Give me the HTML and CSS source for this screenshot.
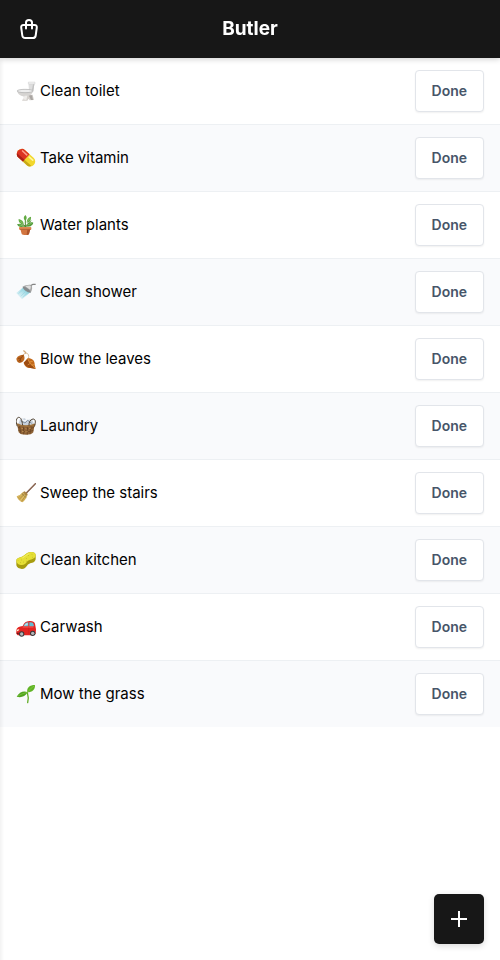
FILE: index.html
```html
<!DOCTYPE html>
<html lang="en">
<head>
  <meta charset="UTF-8" />
  <meta name="viewport" content="width=device-width, initial-scale=1" />
  <title>Butler</title>
  <link rel="stylesheet" href="styles.css">
</head>
<body>
  <header class="header">
    <a class="header-link" href="#shopping" aria-label="Shopping list">
      <svg viewBox="0 0 24 24" width="24" height="24" fill="none" stroke="currentColor" stroke-width="2" stroke-linecap="round" stroke-linejoin="round">
        <path d="M6.500 8h11c1.600 0 2.500 1 2.300 2.500l-1.100 8c-.2 1.600-1.300 2.500-2.900 2.500H8.200c-1.600 0-2.700-.9-2.900-2.500l-1.100-8C4 9 4.900 8 6.500 8z" />
        <path d="M9 11.500V5.500C9 3.800 10.200 3 12 3s3 .8 3 2.500v6" />
      </svg>
    </a>
    <h1 class="header-title">Butler</h1>
  </header>

  <main>
    <ul class="tasks">
      <li class="task">
        <span class="task-name">
          <svg class="icon" viewBox="0 0 60 60" aria-hidden="true">
            <path d="M37 3h20v7h-2l-3 21H39z" fill="#dedede" />
            <path d="M37 3h20v6H37z" fill="#f0f0f0" stroke="#ccc" />
            <path d="M51 10h4l-3 21h-5z" fill="#c2c2c2" />
            <path d="M21 41h29l4 16-13 1-3-5-4 6H18l6-10z" fill="#d5d1cd" />
            <path d="M38 43h10l3 14h-6z" fill="#aaa6a3" />
            <path d="M4 31c2 11 12 16 24 15 12-1 20-5 24-16z" fill="#d6d4d2" />
            <ellipse cx="27" cy="30" rx="24" ry="5" fill="#eee" stroke="#aaa" stroke-width="2" />
            <path d="M20 55l6-11h8l-3 13z" fill="#efedeb" />
          </svg>
          Clean toilet
        </span>
        <button class="done-btn" type="button">Done</button>
      </li>
      <li class="task">
        <span class="task-name">
          <svg class="icon" viewBox="0 0 60 60" aria-hidden="true">
            <g transform="rotate(42 30 29)">
              <rect x="-2" y="14" width="64" height="30" rx="15" fill="#f2d72c" />
              <path d="M31 14H13a15 15 0 0 0 0 30h18z" fill="#dc3322" />
              <path d="M31 37h28c-3 5-6 7-11 7H31z" fill="#c9a817" />
              <path d="M31 37H1c3 5 6 7 11 7h19z" fill="#a91f18" />
              <path d="M9 21h17" stroke="#ff9c86" stroke-width="5" stroke-linecap="round" />
              <path d="M36 21h14" stroke="#fff6a0" stroke-width="5" stroke-linecap="round" />
            </g>
          </svg>
          Take vitamin
        </span>
        <button class="done-btn" type="button">Done</button>
      </li>
      <li class="task">
        <span class="task-name">
          <svg class="icon" viewBox="0 0 60 60" aria-hidden="true">
            <path d="M28 37V12M28 34L12 21M28 34l17-17M28 34L11 31M28 34l17-2" stroke="#49862e" stroke-width="3" fill="none" />
            <path d="M28 17c-7-6-5-12 0-17 5 5 6 11 0 17zM23 28C11 27 7 20 8 12c9 2 15 7 15 16zM32 23c0-9 4-16 13-18 1 10-3 17-13 18z" fill="#62aa43" />
            <path d="M24 34C14 38 6 35 3 28c9-4 16-2 21 6zM32 32c3-9 11-12 20-9-2 9-10 13-20 9z" fill="#4f9a37" />
            <path d="M12 17l9 9M42 10l-9 11M8 29l14 4M47 25l-13 5" stroke="#9bcc7b" stroke-width="2" />
            <path d="M13 41h30l-4 16c-3 4-19 4-22 0z" fill="#d27540" />
            <path d="M34 42h9l-4 15c-1 2-4 3-7 3z" fill="#ae5429" />
            <rect x="9" y="36" width="37" height="8" rx="2" fill="#e08a50" />
            <path d="M12 43h32" stroke="#9b4c29" stroke-width="2" />
          </svg>
          Water plants
        </span>
        <button class="done-btn" type="button">Done</button>
      </li>
      <li class="task">
        <span class="task-name">
          <svg class="icon" viewBox="0 0 60 60" aria-hidden="true">
            <defs>
              <linearGradient id="water" x1="1" y1="0" x2="0" y2="1">
                <stop offset="0" stop-color="#58bdcf" />
                <stop offset="1" stop-color="#c9edf4" stop-opacity=".3" />
              </linearGradient>
            </defs>
            <path d="M22 16L1 33l17 19 26-22z" fill="url(#water)" />
            <path d="M20 24L7 35M29 28L14 43M36 31L20 46" stroke="#7dcbd9" stroke-width="1" />
            <path d="M41 19l6-10c1-2 3-2 5-2h7" fill="none" stroke="#858585" stroke-width="4" />
            <path d="M20 14c9-5 19-7 26-5 4 6 3 15-2 23z" fill="#a5a5a5" />
            <path d="M28 13c6-3 12-3 16-1 1 3 0 7-2 11z" fill="#dfdfdf" />
            <path d="M20 14c8-1 24 9 24 18-10 0-24-10-24-18z" fill="#858a8d" />
          </svg>
          Clean shower
        </span>
        <button class="done-btn" type="button">Done</button>
      </li>
      <li class="task">
        <span class="task-name">
          <svg class="icon" viewBox="0 0 60 60" aria-hidden="true">
            <path d="M20 19c5-6 10-8 15-5 4 4 4 11 1 19" fill="none" stroke="#d9bd9c" stroke-width="3" />
            <path d="M22 5c4 1 6 4 8 8" fill="none" stroke="#d1a879" stroke-width="4" />
            <path d="M23 17c6 12 1 22-12 25-6-1-9-6-10-13 4-9 12-12 22-12z" fill="#bd681f" />
            <path d="M22 18L8 38M15 27L6 28M13 31l2 8" fill="none" stroke="#78380f" stroke-width="2" />
            <path d="M35 28c12-1 22 6 21 19l3 12-12-2c-14 2-22-6-24-16 4-3 7-8 12-13z" fill="#c36a1c" />
            <path d="M35 29c4 11 12 20 24 30-9-1-27-1-36-18z" fill="#9d4c12" />
            <path d="M35 29c4 12 12 20 24 30M40 39l10-2M43 43l-8 5M47 48l8-1" fill="none" stroke="#eba34a" stroke-width="2" />
          </svg>
          Blow the leaves
        </span>
        <button class="done-btn" type="button">Done</button>
      </li>
      <li class="task">
        <span class="task-name">
          <svg class="icon" viewBox="0 0 60 60" aria-hidden="true">
            <path d="M7 25l5-15 14-3 7 5 14-2 8 15-19 9-20-1z" fill="#c9d2dc" />
            <path d="M14 14l13 7 8-8 12 9" fill="none" stroke="#8493a3" stroke-width="3" />
            <path d="M17 11l10 4 6-5" fill="none" stroke="#f6f8fa" stroke-width="4" />
            <path d="M3 24c13 7 39 7 53 1l-4 24c-5 10-38 10-44 0z" fill="#8f6336" />
            <path d="M6 34c14 6 34 6 48 0M7 43c14 6 31 6 45 0M11 29l3 24M22 32l1 23M34 32v24M45 30l-3 23" fill="none" stroke="#65401f" stroke-width="2" />
            <path d="M14 36l7 2M26 38l7 1M38 38l7-2M17 46l6 1M27 48l8-1" stroke="#b98a50" stroke-width="3" />
            <path d="M3 24c13 8 40 8 54 1" fill="none" stroke="#a0733d" stroke-width="5" />
            <path d="M4 31C-2 17 1 5 8 4c7 0 10 9 12 24M39 29c-1-10 4-19 12-20 8 0 9 9 4 23" fill="none" stroke="#514333" stroke-width="3" />
          </svg>
          Laundry
        </span>
        <button class="done-btn" type="button">Done</button>
      </li>
      <li class="task">
        <span class="task-name">
          <svg class="icon" viewBox="0 0 60 60" aria-hidden="true">
            <path d="M28 33L58 2" stroke="#76503c" stroke-width="4" stroke-linecap="round" />
            <path d="M30 30L57 3" stroke="#b48b72" stroke-width="1" />
            <path d="M20 28c-4 6-10 10-18 12 3 8 8 14 17 18 6-4 11-10 14-19z" fill="#d1ae55" />
            <path d="M21 31L6 43M25 33L10 49M29 37L17 55" stroke="#aa8640" stroke-width="2" />
            <path d="M19 34L5 41M27 36L13 53" stroke="#edcf7a" stroke-width="2" />
            <path d="M20 28l6-3 9 8-2 7z" fill="#aa8340" />
            <path d="M17 32l14 12" stroke="#8a7a40" stroke-width="2" />
          </svg>
          Sweep the stairs
        </span>
        <button class="done-btn" type="button">Done</button>
      </li>
      <li class="task">
        <span class="task-name">
          <svg class="icon" viewBox="0 0 60 60" aria-hidden="true">
            <path d="M1 32c0-6 6-8 13-10 8-2 12-8 20-13 9-5 25-4 25 6v13c-2 10-12 11-19 13-7 3-7 8-13 13-8 6-24 2-26-8z" fill="#a79c0f" />
            <path d="M1 32c0-6 6-8 13-10 8-2 12-8 20-13 9-5 25-4 25 7 0 10-12 12-19 14-7 3-7 8-13 12-8 6-26 2-26-10z" fill="#e5df35" />
            <path d="M15 29l2 1M22 36l2 1M12 37l2 1M30 25l2 1M37 16l2 1M47 13l2 1M48 21l2 1M30 33l2 1M7 32l1 1" stroke="#aaa31b" stroke-width="2" />
            <path d="M19 24c7-3 13-11 21-13" stroke="#f7f487" stroke-width="2" fill="none" />
          </svg>
          Clean kitchen
        </span>
        <button class="done-btn" type="button">Done</button>
      </li>
      <li class="task">
        <span class="task-name">
          <svg class="icon" viewBox="0 0 60 60" aria-hidden="true">
            <path d="M1 40c1-8 8-12 19-13 5-10 10-14 20-15 9-1 15 2 17 8l3 17-1 14-7 4H5l-4-5z" fill="#e32422" />
            <path d="M22 28c4-9 8-11 15-12v12zM40 16c8-1 12 1 13 7l1 5H40z" fill="#62bcd0" />
            <path d="M25 26c3-6 6-8 10-8v6z" fill="#b7e3ec" />
            <path d="M38 28v22" stroke="#b51b1b" stroke-width="1" />
            <path d="M20 30h32" stroke="#ff7770" stroke-width="2" />
            <path d="M3 38l7-2-3 6-5 1z" fill="#fff0d0" />
            <path d="M1 47h7v5H4z" fill="#681717" />
            <circle cx="17" cy="51" r="8" fill="#38383a" />
            <circle cx="17" cy="51" r="5" fill="#b5b5b8" />
            <circle cx="50" cy="49" r="8" fill="#38383a" />
            <circle cx="50" cy="49" r="5" fill="#b5b5b8" />
          </svg>
          Carwash
        </span>
        <button class="done-btn" type="button">Done</button>
      </li>
      <li class="task">
        <span class="task-name">
          <svg class="icon" viewBox="0 0 60 60" aria-hidden="true">
            <path d="M35 56c3-11 2-21-1-31" fill="none" stroke="#64ad28" stroke-width="4" stroke-linecap="round" />
            <path d="M34 25C31 11 41 3 57 3c1 13-8 22-23 22z" fill="#61b426" />
            <path d="M35 25C24 19 10 24 2 38c13 4 25 0 33-13z" fill="#50a31e" />
            <path d="M34 25c7-8 13-14 22-20M35 25C24 27 14 31 5 37" fill="none" stroke="#8acb48" stroke-width="2" />
          </svg>
          Mow the grass
        </span>
        <button class="done-btn" type="button">Done</button>
      </li>
    </ul>
  </main>

  <button class="add-btn" type="button" aria-label="Add task">
    <svg viewBox="0 0 24 24" width="24" height="24" fill="none" stroke="currentColor" stroke-width="2">
      <path d="M12 4v16M4 12h16" />
    </svg>
  </button>
</body>
</html>
```
FILE: styles.css
```css
* {
  box-sizing: border-box;
}
body {
  margin: 0;
  min-height: 100vh;
  background: #fff;
  color: #000;
  font-family: Inter, "Liberation Sans", sans-serif;
  font-size: 15px;
  line-height: 24px;
}
/* soft shade along the left edge of the panel */
body::before {
  content: "";
  position: fixed;
  top: 0;
  bottom: 0;
  left: 0;
  width: 4px;
  background: linear-gradient(90deg, rgba(0, 0, 0, 0.05), transparent);
  pointer-events: none;
}
.header {
  position: sticky;
  top: 0;
  z-index: 1;
  display: grid;
  grid-template-columns: 1fr auto 1fr;
  align-items: center;
  height: 58px;
  padding: 0 17px;
  background: #171717;
  color: #fff;
  box-shadow: 0 1px 6px rgba(0, 0, 0, 0.2);
}
.header-link {
  display: flex;
  justify-self: start;
  color: #fff;
}
.header-title {
  margin: 0;
  font-size: 19px;
  font-weight: 700;
  line-height: 28px;
}
.tasks {
  margin: 0;
  padding: 0;
  list-style: none;
}
.task {
  display: flex;
  align-items: center;
  justify-content: space-between;
  padding: 12px 16px;
  border-bottom: 1px solid #edf0f3;
}
.task:nth-child(even) {
  background: #f9fafc;
}
.task:last-child {
  border-bottom: none;
}
.task-name {
  display: flex;
  align-items: center;
  gap: 4px;
}
.icon {
  width: 20px;
  height: 20px;
  flex-shrink: 0;
}
button {
  cursor: pointer;
  font-family: inherit;
}
.done-btn {
  padding: 10px 16px;
  background: #fff;
  color: #475569;
  border: 1px solid #e2e5ea;
  border-radius: 4px;
  font-size: 14px;
  font-weight: 600;
  line-height: 20px;
  box-shadow: 0 1px 2px rgba(0, 0, 0, 0.06);
}
.add-btn {
  position: fixed;
  right: 16px;
  bottom: 16px;
  display: flex;
  align-items: center;
  justify-content: center;
  width: 50px;
  height: 50px;
  padding: 0;
  background: #171717;
  color: #fff;
  border: none;
  border-radius: 5px;
  box-shadow: 0 2px 6px rgba(0, 0, 0, 0.15);
}
```
